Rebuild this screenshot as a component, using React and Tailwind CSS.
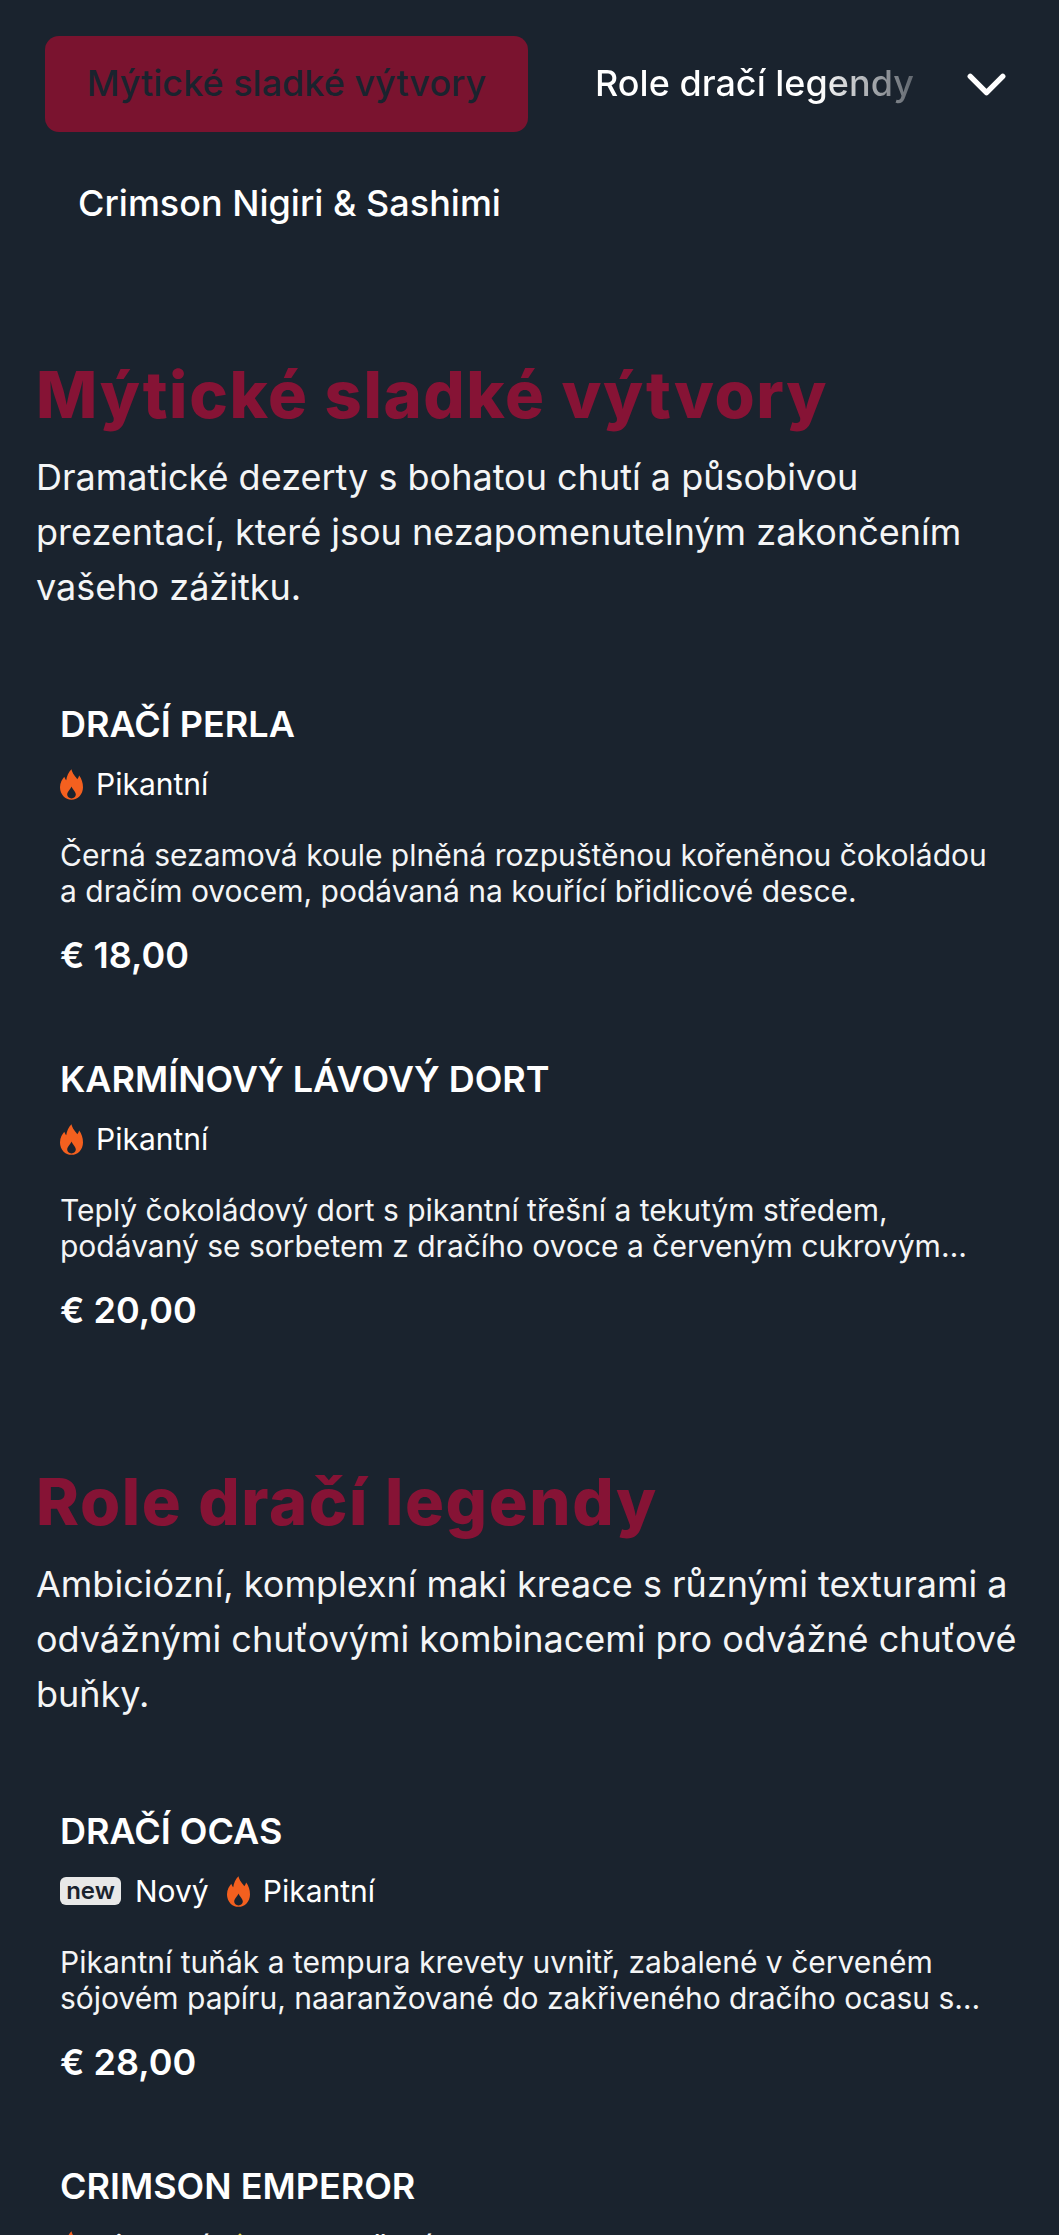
import { FaStar } from 'react-icons/fa';
import { ChevronDown } from 'lucide-react';

const sections = [
  {
    title: 'Mýtické sladké výtvory',
    desc: 'Dramatické dezerty s bohatou chutí a působivou prezentací, které jsou nezapomenutelným zakončením vašeho zážitku.',
    items: [
      {
        name: 'DRAČÍ PERLA',
        desc: 'Černá sezamová koule plněná rozpuštěnou kořeněnou čokoládou a dračím ovocem, podávaná na kouřící břidlicové desce.',
        price: '€ 18,00',
      },
      {
        name: 'KARMÍNOVÝ LÁVOVÝ DORT',
        desc: 'Teplý čokoládový dort s pikantní třešní a tekutým středem, podávaný se sorbetem z dračího ovoce a červeným cukrovým práškem a zlatými lístky.',
        price: '€ 20,00',
      },
    ],
  },
  {
    title: 'Role dračí legendy',
    desc: 'Ambiciózní, komplexní maki kreace s různými texturami a odvážnými chuťovými kombinacemi pro odvážné chuťové buňky.',
    items: [
      {
        name: 'DRAČÍ OCAS',
        isNew: true,
        desc: 'Pikantní tuňák a tempura krevety uvnitř, zabalené v červeném sójovém papíru, naaranžované do zakřiveného dračího ocasu s avokádem a pikantní majonézou.',
        price: '€ 28,00',
      },
      {
        name: 'CRIMSON EMPEROR',
        isFavourite: true,
        desc: '',
        price: '',
      },
    ],
  },
];

function Flame() {
  return (
    <svg viewBox="0 0 24 32" className="h-[31px] w-[23px] shrink-0 fill-[#f4601f]">
      <path
        fillRule="evenodd"
        d="M12 0C13 5 16 7 18 10.5C19 9 19.6 8 20 6.5C22.5 10 24 14 24 19C24 26.5 18.5 32 12 32C5.5 32 0 26.5 0 19C0 14 2.5 10.5 4.5 8C5 9.5 5.5 10.5 6.5 11.5C7 7 9 3 12 0ZM12 18C11 21 7.5 23.5 7.5 26.5C7.5 29 9.5 30.5 12 30.5C14.5 30.5 16.5 29 16.5 26.5C16.5 23.5 13 21 12 18Z"
      />
    </svg>
  );
}

function Tags({ isNew, isFavourite }) {
  return (
    <div className="mt-[20px] flex h-[36px] items-center text-[30px] leading-[36px]">
      {isNew && (
        <>
          <span className="flex h-[28px] w-[61px] items-center justify-center rounded-[6px] bg-[#e8e8e8] text-[24px] font-semibold leading-none text-[#1a232e]">new</span>
          <span className="ml-[14px] mr-[18px]">Nový</span>
        </>
      )}
      <Flame />
      <span className="ml-[13px]">Pikantní</span>
      {isFavourite && (
        <>
          <FaStar className="ml-[18px] h-[28px] w-[28px] text-[#e6d23c]" />
          <span className="ml-[12px]">Doporučení</span>
        </>
      )}
    </div>
  );
}

function Item({ item }) {
  return (
    <div>
      <h3 className="text-[36px] font-semibold leading-[44px]">{item.name}</h3>
      <Tags isNew={item.isNew} isFavourite={item.isFavourite} />
      <p className="mt-[35px] line-clamp-2 text-[30px] leading-[36px] text-[#f4f5f6]">{item.desc}</p>
      <div className="mt-[24px] text-[36px] font-semibold leading-[44px]">{item.price}</div>
    </div>
  );
}

export default function App() {
  return (
    <div className="h-[2235px] overflow-hidden bg-[#1a232e] font-['Inter',sans-serif] text-white">
      <nav className="pl-[45px] pt-[36px]">
        <div className="flex h-[96px] items-center text-[36px] font-medium">
          <div className="flex h-full w-[483px] shrink-0 items-center justify-center rounded-[14px] bg-[#7a132f] pb-[2px] text-[#1a232e]">Mýtické sladké výtvory</div>
          <div className="ml-[67px] w-[320px] shrink-0 overflow-hidden whitespace-nowrap bg-gradient-to-r from-white from-70% to-white/30 bg-clip-text pb-[2px] text-transparent">Role dračí legendy</div>
          <ChevronDown className="ml-[39px] h-[65px] w-[65px] shrink-0" strokeWidth={2} />
        </div>
        <div className="mt-[32px] flex h-[78px] w-[489px] items-center justify-center text-[36px] font-medium">Crimson Nigiri &amp; Sashimi</div>
      </nav>
      <main>
        {sections.map((s) => (
          <section key={s.title} className="pt-[125px] first:pt-[108px]">
            <div className="px-[36px]">
              <h2 className="text-[65px] font-extrabold leading-[90px] tracking-[1.6px] text-[#861335]">{s.title}</h2>
              <p className="mt-[10px] text-[36px] leading-[55px] text-[#f4f5f6]">{s.desc}</p>
            </div>
            <div className="mt-[87px] flex flex-col gap-[80px] px-[60px]">
              {s.items.map((it) => <Item key={it.name} item={it} />)}
            </div>
          </section>
        ))}
      </main>
    </div>
  );
}
